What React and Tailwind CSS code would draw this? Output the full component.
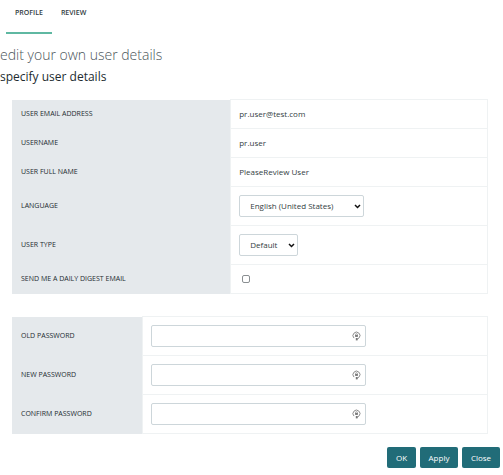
import { useId, useState } from 'react'

const labelCell = 'bg-[#e5e9ec] p-0 pl-[9px] text-left align-middle text-[7px] font-normal uppercase text-[#222b30]'
const valueCell = 'border border-[#eff2f3] p-0 pl-2 align-middle'
const selectBase =
  'block h-[22px] appearance-none rounded-xs border border-[#cdd6da] bg-white pl-[10px] text-[8px] text-[#333d42] focus:outline-none focus:ring-1 focus:ring-[#216c78]'
const buttonBase = 'h-[21px] rounded-xs bg-[#216c78] text-[8px] font-medium text-white hover:bg-[#1a5862]'

const tabs = [
  { id: 'profile', label: 'Profile' },
  { id: 'review', label: 'Review' },
]

const details = [
  { label: 'User email address', value: 'pr.user@test.com' },
  { label: 'Username', value: 'pr.user' },
  { label: 'User full name', value: 'PleaseReview User' },
]

function Select({ id, options, className }) {
  return (
    <div className={`relative ${className}`}>
      <select id={id} className={`${selectBase} w-full`}>
        {options.map((o) => (
          <option key={o}>{o}</option>
        ))}
      </select>
      <svg
        className="pointer-events-none absolute right-[3px] top-[9px] h-[5px] w-[7px]"
        viewBox="0 0 7 5"
        fill="none"
        stroke="#111"
        strokeWidth="1.5"
      >
        <path d="M1 1l2.5 2.5L6 1" />
      </svg>
    </div>
  )
}

function PasswordRow({ label }) {
  const id = useId()
  const [value, setValue] = useState('')

  return (
    <tr className="h-[39px]">
      <th scope="row" className={labelCell}>
        <label htmlFor={id}>{label}</label>
      </th>
      <td className={valueCell}>
        <div className="relative w-[215px]">
          <input
            id={id}
            type="password"
            value={value}
            onChange={(e) => setValue(e.target.value)}
            className="block h-[22px] w-full rounded-xs border border-[#cdd6da] bg-white pl-2 pr-5 text-[8px] focus:outline-none focus:ring-1 focus:ring-[#216c78]"
          />
          <svg
            className="pointer-events-none absolute right-[5px] top-[6px] h-[10px] w-[9px]"
            viewBox="0 0 9 10"
            fill="none"
            stroke="#8c8c8c"
          >
            <path d="M2 7.1A3.5 3.5 0 1 1 7.2 6.8L5 8.4" />
            <path d="M3.6 4V3.5a.9.9 0 0 1 1.8 0V4" strokeWidth="0.7" />
            <path d="M3.1 3.9h2.8v2H3.1z" fill="#777" stroke="none" />
            <path d="M3.8 7h1.8v2.4H3.8z" fill="#777" stroke="none" />
          </svg>
        </div>
      </td>
    </tr>
  )
}

export default function UserDetails() {
  const langId = useId()
  const typeId = useId()
  const digestId = useId()
  const [tab, setTab] = useState('profile')
  const [digest, setDigest] = useState(false)

  return (
    <div className="bg-white font-['Open_Sans',sans-serif] text-[#333d42]">
      <nav className="flex pl-[6px]">
        {tabs.map((t) => (
          <button
            key={t.id}
            type="button"
            onClick={() => setTab(t.id)}
            className={`h-[34px] border-b-2 px-[9px] pb-[5px] text-[7px] font-semibold uppercase ${
              tab === t.id ? 'border-[#5fb8a2]' : 'border-transparent'
            }`}
          >
            {t.label}
          </button>
        ))}
      </nav>

      <h1 className="mt-[11px] text-[14px] font-light leading-5 text-[#4b555a]">edit your own user details</h1>
      <h2 className="mt-1 text-[12px] leading-4 text-[#222b30]">specify user details</h2>

      <form onSubmit={(e) => e.preventDefault()}>
        <div className="pl-3 pr-[15px]">
          <table className="mt-[14px] w-full table-fixed border-collapse text-[8px]">
            <colgroup>
              <col className="w-[46%]" />
              <col />
            </colgroup>
            <tbody>
              {details.map((d) => (
                <tr key={d.label} className="h-[29px]">
                  <th scope="row" className={labelCell}>
                    {d.label}
                  </th>
                  <td className={valueCell}>{d.value}</td>
                </tr>
              ))}
              <tr className="h-[39px]">
                <th scope="row" className={labelCell}>
                  <label htmlFor={langId}>Language</label>
                </th>
                <td className={valueCell}>
                  <Select
                    id={langId}
                    className="w-[125px]"
                    options={['English (United States)', 'English (United Kingdom)']}
                  />
                </td>
              </tr>
              <tr className="h-[39px]">
                <th scope="row" className={labelCell}>
                  <label htmlFor={typeId}>User type</label>
                </th>
                <td className={valueCell}>
                  <Select id={typeId} className="w-[59px]" options={['Default', 'Reviewer']} />
                </td>
              </tr>
              <tr className="h-[29px]">
                <th scope="row" className={labelCell}>
                  <label htmlFor={digestId}>Send me a daily digest email</label>
                </th>
                <td className={valueCell}>
                  <input
                    id={digestId}
                    type="checkbox"
                    checked={digest}
                    onChange={(e) => setDigest(e.target.checked)}
                    className="ml-[3px] block size-2 appearance-none rounded-xs border border-[#8a8f92] bg-white checked:bg-[#216c78]"
                  />
                </td>
              </tr>
            </tbody>
          </table>

          <table className="mt-[22px] w-full table-fixed border-collapse">
            <colgroup>
              <col className="w-[130px]" />
              <col />
            </colgroup>
            <tbody>
              <PasswordRow label="Old password" />
              <PasswordRow label="New password" />
              <PasswordRow label="Confirm password" />
            </tbody>
          </table>
        </div>

        <div className="mt-[13px] flex justify-end gap-1 pr-[3px]">
          <button type="submit" className={`${buttonBase} w-[29px]`}>
            OK
          </button>
          <button type="button" className={`${buttonBase} w-[38px]`}>
            Apply
          </button>
          <button type="button" className={`${buttonBase} w-[38px]`}>
            Close
          </button>
        </div>
      </form>
    </div>
  )
}
